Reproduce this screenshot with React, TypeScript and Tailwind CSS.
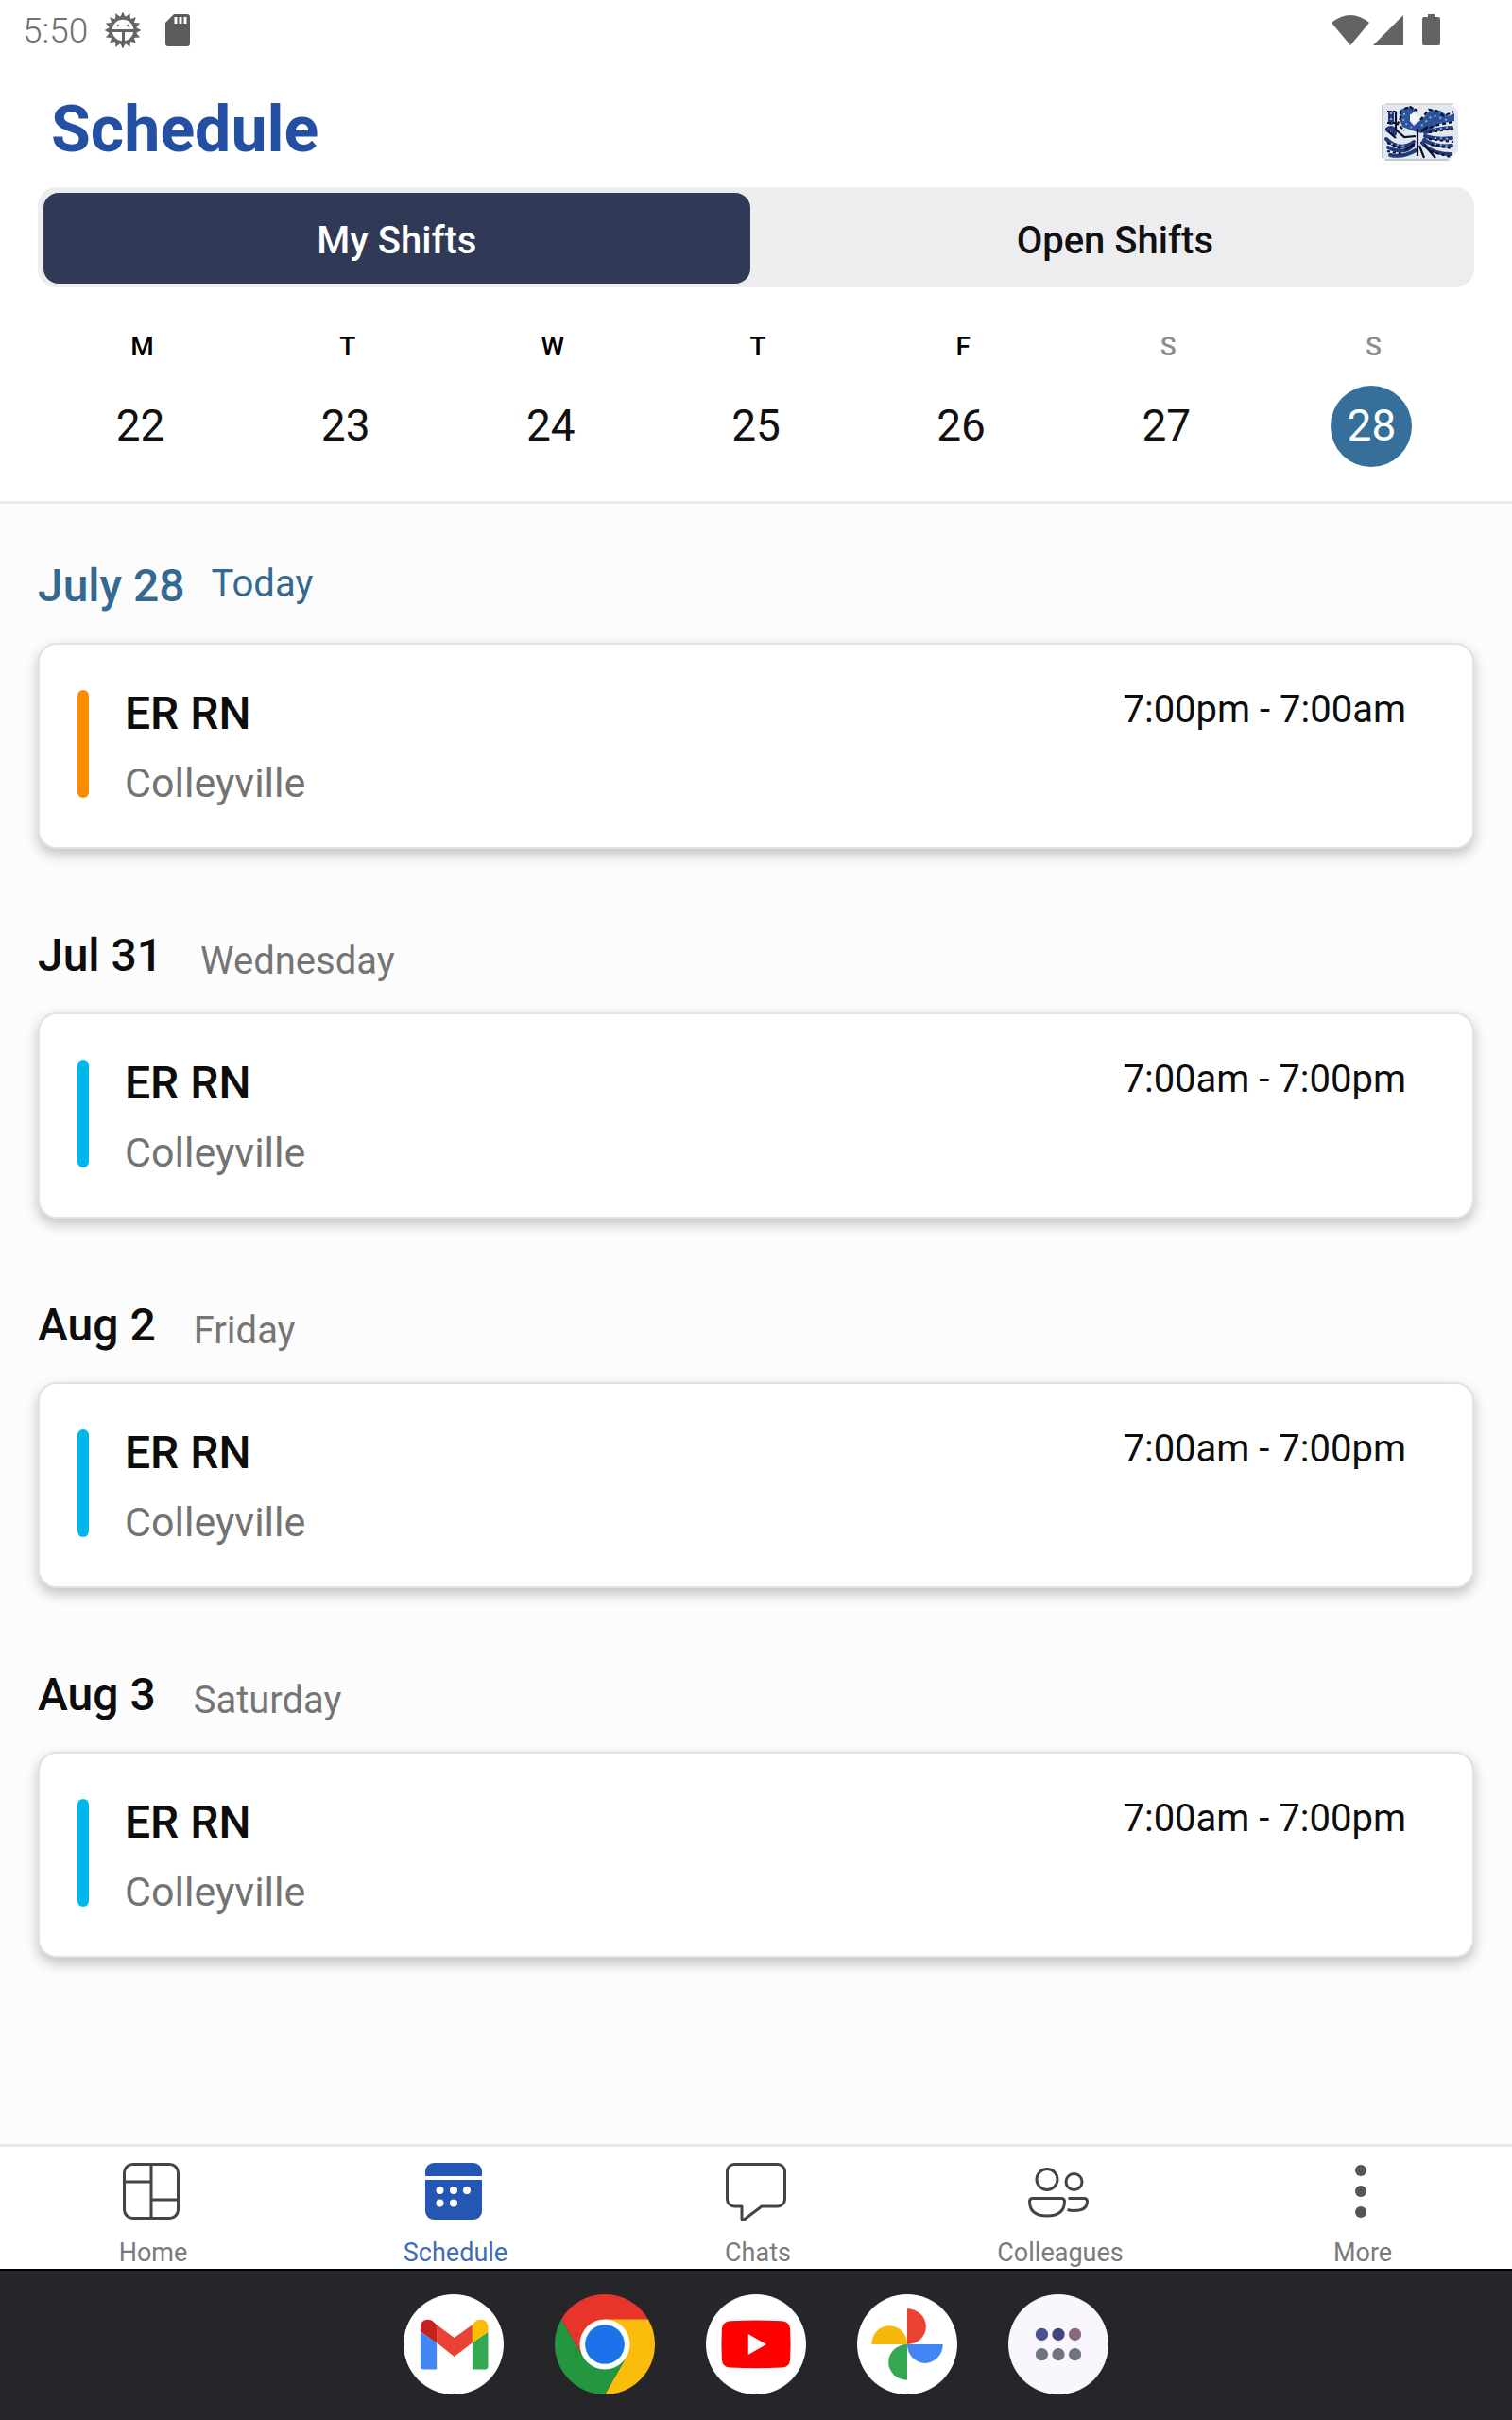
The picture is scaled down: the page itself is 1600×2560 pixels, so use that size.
import { useState } from 'react';
import type { ReactNode } from 'react';

const days = [
  { letter: 'M', date: 22 },
  { letter: 'T', date: 23 },
  { letter: 'W', date: 24 },
  { letter: 'T', date: 25 },
  { letter: 'F', date: 26 },
  { letter: 'S', date: 27, weekend: true },
  { letter: 'S', date: 28, weekend: true },
];

const shifts = [
  { date: 'July 28', day: 'Today', time: '7:00pm - 7:00am', today: true, bar: 'bg-[#fb8c00]' },
  { date: 'Jul 31', day: 'Wednesday', time: '7:00am - 7:00pm', today: false, bar: 'bg-[#00b8ec]' },
  { date: 'Aug 2', day: 'Friday', time: '7:00am - 7:00pm', today: false, bar: 'bg-[#00b8ec]' },
  { date: 'Aug 3', day: 'Saturday', time: '7:00am - 7:00pm', today: false, bar: 'bg-[#00b8ec]' },
];

function GearIcon() {
  const teeth = Array.from({ length: 16 }, (_, i) => i * 22.5);
  return (
    <svg viewBox="0 0 38 38" className="size-[38px]" fill="none" stroke="#666" aria-hidden="true">
      <circle cx="19" cy="19" r="13" strokeWidth="3.4" />
      {teeth.map((a) => (
        <path key={a} d="M17 5 L19 1 L21 5 Z" fill="#666" strokeWidth="1.4" transform={`rotate(${a} 19 19)`} />
      ))}
      <path d="M6 19.500h26M19.500 20v12" strokeWidth="3" />
      <path d="M13 15l1.500-2M25 15l-1.500-2" strokeWidth="1.6" />
    </svg>
  );
}

function SdCardIcon() {
  return (
    <svg viewBox="0 0 26 34" className="h-[34px] w-[26px]" aria-hidden="true">
      <path d="M9 0h14a3 3 0 0 1 3 3v28a3 3 0 0 1-3 3H3a3 3 0 0 1-3-3V9z" fill="#5c5c5c" />
      <path d="M9.500 3h3v7h-3zM14.500 3h3v7h-3zM19.500 3h3v7h-3z" fill="#fff" />
    </svg>
  );
}

function StatusIcons() {
  return (
    <svg viewBox="0 0 116 34" className="h-[34px] w-[116px]" fill="#636363" aria-hidden="true">
      <path d="M0 9Q20-7 40 9L20 33z" />
      <path d="M44 33L76 1v32z" />
      <path d="M102 0h7v3h4a2 2 0 0 1 2 2v26a2 2 0 0 1-2 2H98a2 2 0 0 1-2-2V5a2 2 0 0 1 2-2h4z" />
    </svg>
  );
}

function Avatar() {
  return (
    <svg viewBox="0 0 81 61" className="h-[61px] w-[81px]" fill="none" role="img" aria-label="Profile">
      <path d="M2 1H70Q81 3 81 14V50L72 61H6Q0 60 0 54V3z" fill="#e3e7f2" />
      <path d="M1 2V58M4 60H70" stroke="#b9bdc8" strokeWidth="1.5" />
      <path d="M4 1H76" stroke="#dcd8c6" strokeWidth="2" />
      <path d="M20 7l8-3 10 3-6 4-2 8 4 5 10-8 8-9 10 1 8 6 7-3v8l-16 3-8 5-11 5-10-3-10-4-3-8z" fill="#2c529b" />
      <path d="M30 12l6-1 4 5-6 6-4-3z" fill="#f4f7fd" />
      <g stroke="#22397a" strokeLinecap="round" strokeWidth="4">
        <path d="M10 11v9M7 28q6-3 6 4" strokeWidth="6" />
        <path d="M46 31q12-4 28-5M46 35q12 4 28 2M45 39q12 8 29 6M43 42q10 12 30 12" />
        <path d="M5 38q14 14 29 3M7 47q16 8 26-2M9 55q14 3 27-5" />
      </g>
      <g stroke="#0a1024" strokeWidth="2.2">
        <path d="M38 27v29M15 9v19l9 8 12-1M42 30l7-5M35 43L25 50M40 45l5 13M45 44l12 14M7 30l8 7" />
        <path d="M6 9h9M6 21h8M20 8v8l-3 6 7 7M24 6l6-2 8 4" strokeDasharray="4 2" />
        <path d="M41 18l9-11 8 1 8 6 10-5M44 28l16-5 16-3" strokeDasharray="4 3" />
        <path d="M50 31l26-4M50 38l26 3M52 44l23 4M52 51l21 6M6 42l14 6M6 51l18 3" strokeDasharray="3 3" />
      </g>
      <g stroke="#8aa9dc" strokeWidth="2" strokeDasharray="2 4">
        <path d="M10 10v11M24 11l-1 9 9 6M42 24l12-11 18 6M56 28l18-3M56 37l18 1M56 43l16 3M10 43l16 3" />
      </g>
    </svg>
  );
}

const navStroke = { fill: 'none', stroke: '#444', strokeWidth: 3, strokeLinejoin: 'round' as const };

function HomeIcon() {
  return (
    <svg viewBox="0 0 60 62" className="h-[62px] w-[60px]" {...navStroke} aria-hidden="true">
      <rect x="1.500" y="2.500" width="57" height="57" rx="9" />
      <path d="M30 3v56M2 21h28M30 40h28" />
    </svg>
  );
}

function CalendarIcon() {
  return (
    <svg viewBox="0 0 60 62" className="h-[62px] w-[60px]" aria-hidden="true">
      <path d="M9 1h42a9 9 0 0 1 9 9v5H0v-5a9 9 0 0 1 9-9z" fill="#2357b3" />
      <path d="M0 19h60v33a9 9 0 0 1-9 9H9a9 9 0 0 1-9-9z" fill="#2357b3" />
      <g fill="#fff">
        <circle cx="15.500" cy="30" r="4" />
        <circle cx="30" cy="30" r="4" />
        <circle cx="44" cy="30" r="4" />
        <circle cx="15.500" cy="43.500" r="4" />
        <circle cx="30" cy="43.500" r="4" />
      </g>
    </svg>
  );
}

function ChatIcon() {
  return (
    <svg viewBox="0 0 64 62" className="h-[62px] w-16" {...navStroke} aria-hidden="true">
      <path d="M9 2.500h46a7.500 7.500 0 0 1 7.500 7.500v29.500a7.500 7.500 0 0 1-7.500 7.500H38L20 60.500q-3 2-3-1V47H9a7.500 7.500 0 0 1-7.500-7.500V10A7.500 7.500 0 0 1 9 2.500z" />
    </svg>
  );
}

function PeopleIcon() {
  return (
    <svg viewBox="0 0 64 62" className="h-[62px] w-16" {...navStroke} aria-hidden="true">
      <circle cx="20" cy="18.500" r="11" />
      <circle cx="48.500" cy="21" r="8.500" />
      <path d="M4.500 38.500h31a3 3 0 0 1 3 3q0 15.500-18.500 15.500T1.500 41.500a3 3 0 0 1 3-3z" />
      <path d="M42.500 38.500h17a3 3 0 0 1 3 3q0 10-14 10-4 0-7-1" />
    </svg>
  );
}

function MoreIcon() {
  return (
    <svg viewBox="0 0 12 62" className="h-[62px] w-3" fill="#555" aria-hidden="true">
      <circle cx="6" cy="9" r="6" />
      <circle cx="6" cy="31" r="6" />
      <circle cx="6" cy="53" r="6" />
    </svg>
  );
}

const navItems: { label: string; icon: ReactNode }[] = [
  { label: 'Home', icon: <HomeIcon /> },
  { label: 'Schedule', icon: <CalendarIcon /> },
  { label: 'Chats', icon: <ChatIcon /> },
  { label: 'Colleagues', icon: <PeopleIcon /> },
  { label: 'More', icon: <MoreIcon /> },
];

const dockApps: { label: string; art: ReactNode }[] = [
  {
    label: 'Gmail',
    art: (
      <>
        <circle cx="160" cy="160" r="160" fill="#fff" />
        <path d="M54 120l52 34v86H64a10 10 0 0 1-10-10z" fill="#4285f4" />
        <path d="M220 154l50-34v110a10 10 0 0 1-10 10h-40z" fill="#34a853" />
        <path d="M106 97l56 42 58-42v58l-58 44-56-44z" fill="#ea4335" />
        <path d="M54 106C54 80 80 74 96 88l10 9v58l-52-36z" fill="#c5221f" />
        <path d="M270 106c0-26-26-32-42-18l-8 9v58l50-36z" fill="#fbbc04" />
      </>
    ),
  },
  {
    label: 'Chrome',
    art: (
      <>
        <path d="M21.400 80A160 160 0 0 1 298.600 80L160 160z" fill="#e8352b" />
        <path d="M298.600 80A160 160 0 0 1 160 320L229.300 200 160 80z" fill="#fbbc0b" />
        <path d="M160 320A160 160 0 0 1 21.400 80L90.700 200l69.300 40 69.300-40z" fill="#23963f" />
        <path d="M21.400 80L90.700 200 160 160V80z" fill="#e8352b" />
        <circle cx="160" cy="160" r="80" fill="#fff" />
        <circle cx="160" cy="160" r="63" fill="#1a73e8" />
      </>
    ),
  },
  {
    label: 'YouTube',
    art: (
      <>
        <circle cx="160" cy="160" r="160" fill="#fff" />
        <path d="M78 85q82-4 164 0 26 2 27 27 3 48 0 96-1 25-27 26-82 4-164 0-26-1-27-26-3-48 0-96 1-25 27-27z" fill="#f00" />
        <path d="M135 127v66l58-33z" fill="#fff" />
      </>
    ),
  },
  {
    label: 'Photos',
    art: (
      <>
        <circle cx="160" cy="160" r="160" fill="#fff" />
        <path d="M160 46a60 57 0 0 1 0 114z" fill="#ea4335" />
        <path d="M274 160a57 60 0 0 1-114 0z" fill="#4285f4" />
        <path d="M160 274a60 57 0 0 1 0-114z" fill="#34a853" />
        <path d="M46 160a57 60 0 0 1 114 0z" fill="#f7b70b" />
      </>
    ),
  },
  {
    label: 'All apps',
    art: (
      <>
        <circle cx="160" cy="160" r="160" fill="#f9f6fd" />
        <circle cx="107" cy="128" r="20" fill="#494f8f" />
        <circle cx="160" cy="128" r="20" fill="#42447f" />
        <circle cx="213" cy="128" r="20" fill="#86697f" />
        <circle cx="107" cy="192" r="20" fill="#70747e" />
        <circle cx="160" cy="192" r="20" fill="#70747e" />
        <circle cx="213" cy="192" r="20" fill="#70747e" />
      </>
    ),
  },
];

export default function App() {
  const [tab, setTab] = useState('My Shifts');
  const [selected, setSelected] = useState(28);
  const [section, setSection] = useState('Schedule');

  return (
    <div className="flex min-h-screen flex-col bg-[#fcfcfc] font-[Roboto,sans-serif] text-[#0d0d0d]">
      <header className="border-b-3 border-[#ebebeb] bg-white">
        <div className="flex h-16 items-center justify-between pr-[75px] pl-6 text-[#707070]">
          <div className="flex items-center">
            <span className="text-[37px] leading-none font-light">5:50</span>
            <span className="ml-[18px]"><GearIcon /></span>
            <span className="ml-[26px]"><SdCardIcon /></span>
          </div>
          <StatusIcons />
        </div>

        <div className="flex h-[134px] items-center justify-between pt-4 pr-[57px] pl-[54px]">
          <h1 className="pb-1 text-[68px] leading-[80px] font-bold text-[#2450a4]">Schedule</h1>
          <button type="button"><Avatar /></button>
        </div>

        <div className="mx-10 grid grid-cols-[59fr_60fr] gap-[6px] rounded-[20px] bg-[#ededf0] pt-[6px] pb-1 pl-[6px]">
          {['My Shifts', 'Open Shifts'].map((name) => (
            <button
              key={name}
              type="button"
              aria-pressed={tab === name}
              onClick={() => setTab(name)}
              className={`h-24 rounded-2xl pt-[6px] text-[40px] leading-none font-medium ${
                tab === name ? 'bg-[#303a57] text-white' : 'text-[#111]'
              }`}
            >
              {name}
            </button>
          ))}
        </div>

        <div className="mx-10 grid grid-cols-7 pt-[47px] pb-9">
          {days.map((d) => (
            <button key={d.date} type="button" onClick={() => setSelected(d.date)} className="flex flex-col items-center">
              <span className={`pl-1 text-[28px] leading-8 font-medium ${d.weekend ? 'text-[#8e8e8e]' : 'text-black'}`}>
                {d.letter}
              </span>
              <span
                className={`mt-[25px] flex size-[86px] items-center justify-center rounded-full pb-[2px] text-[46px] leading-none ${
                  selected === d.date ? 'bg-[#366f99] text-white' : 'text-[#111]'
                }`}
              >
                {d.date}
              </span>
            </button>
          ))}
        </div>
      </header>

      <main className="flex-1 px-10 pt-[49px]">
        {shifts.map((s) => (
          <section key={s.date} className="mb-[75px]">
            <div className={`flex items-center ${s.today ? 'text-[#346a92]' : ''}`}>
              <h2 className="text-[48px] leading-[76px] font-medium">{s.date}</h2>
              <span className={`text-[40px] leading-[48px] ${s.today ? 'ml-7 pb-1' : 'ml-10 pt-3 text-[#757575]'}`}>
                {s.day}
              </span>
            </div>
            <article className="mt-[22px] flex h-[218px] items-start rounded-[20px] border-2 border-[#e2e2e2] bg-white pt-12 pr-[70px] pl-10 shadow-[0_6px_14px_rgba(0,0,0,0.24)]">
              <span className={`h-[114px] w-3 rounded-full ${s.bar}`} />
              <div className="ml-[38px] flex-1">
                <h3 className="text-[48px] leading-[50px] font-medium">ER RN</h3>
                <p className="mt-6 text-[43px] leading-[48px] text-[#737373]">Colleyville</p>
              </div>
              <time className="text-[40px] leading-[42px]">{s.time}</time>
            </article>
          </section>
        ))}
      </main>

      <nav className="grid h-[132px] grid-cols-5 border-t-3 border-[#e8e8e8] bg-white">
        {navItems.map((n) => (
          <button
            key={n.label}
            type="button"
            onClick={() => setSection(n.label)}
            className={`flex flex-col items-center pt-4 text-[27px] leading-8 ${
              section === n.label ? 'text-[#3f6dbd]' : 'text-[#7b7b7b]'
            }`}
          >
            {n.icon}
            <span className="mt-[18px] pl-1">{n.label}</span>
          </button>
        ))}
      </nav>

      <footer className="flex h-40 items-center justify-center gap-[54px] border-t-2 border-black bg-[#26262a] pb-[2px]">
        {dockApps.map((a) => (
          <button key={a.label} type="button" aria-label={a.label}>
            <svg viewBox="0 0 320 320" className="size-[106px]" aria-hidden="true">{a.art}</svg>
          </button>
        ))}
      </footer>
    </div>
  );
}
